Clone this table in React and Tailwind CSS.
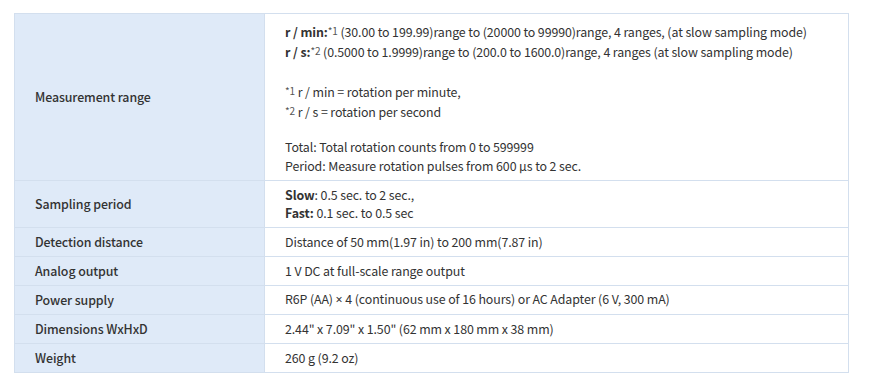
import React from 'react'

const rows = [
  ['Sampling period', (
    <div className="py-[5px] leading-[18px]">
      <div><b className="font-bold">Slow</b>: 0.5 sec. to 2 sec.,</div>
      <div><b className="font-bold">Fast:</b> 0.1 sec. to 0.5 sec</div>
    </div>
  )],
  ['Detection distance', 'Distance of 50 mm(1.97 in) to 200 mm(7.87 in)'],
  ['Analog output', '1 V DC at full-scale range output'],
  ['Power supply', (
    <>R6P (AA) <span style={{ fontFamily: '"Noto Sans", sans-serif' }}>×</span> 4 (continuous use of 16 hours) or AC Adapter (6 V, 300 mA)</>
  )],
  ['Dimensions WxHxD', '2.44" x 7.09" x 1.50" (62 mm x 180 mm x 38 mm)'],
  ['Weight', '260 g (9.2 oz)'],
]

function Sup({ children }) {
  return <sup className="text-[10px] relative -top-[2px] text-[#555]">{children}</sup>
}

export default function App() {
  return (
    <div
      className="bg-white w-[879px] h-[388px] pt-[13px] pl-[14px] text-[12.4px] tracking-[-0.1px] text-[#333]"
      style={{ fontFamily: '"Noto Sans CJK KR", "Noto Sans", sans-serif' }}
    >
      <table className="w-[835px] border-collapse border border-[#d3dfee]">
        <tbody>
          <tr>
            <th className="w-[250px] bg-[#dfeaf8] border border-[#d3dfee] text-left font-medium pl-5 align-middle">
              Measurement range
            </th>
            <td className="border border-[#d3dfee] pl-5 pt-[8px] pb-[4px] leading-[20px]">
              <div><b className="font-bold">r / min:</b><Sup>*1</Sup> (30.00 to 199.99)range to (20000 to 99990)range, 4 ranges, (at slow sampling mode)</div>
              <div><b className="font-bold">r / s:</b><Sup>*2</Sup> (0.5000 to 1.9999)range to (200.0 to 1600.0)range, 4 ranges (at slow sampling mode)</div>
              <div className="h-[20px]" />
              <div><Sup>*1</Sup> r / min = rotation per minute,</div>
              <div><Sup>*2</Sup> r / s = rotation per second</div>
              <div className="h-[16px]" />
              <div className="leading-[19px]">Total: Total rotation counts from 0 to 599999</div>
              <div className="leading-[19px]">Period: Measure rotation pulses from 600 µs to 2 sec.</div>
            </td>
          </tr>
          {rows.map(([label, value]) => (
            <tr key={label}>
              <th className="bg-[#dfeaf8] border border-[#d3dfee] text-left font-medium pl-5 h-[29px]">
                {label}
              </th>
              <td className="border border-[#d3dfee] pl-5 h-[29px]">{value}</td>
            </tr>
          ))}
        </tbody>
      </table>
    </div>
  )
}
